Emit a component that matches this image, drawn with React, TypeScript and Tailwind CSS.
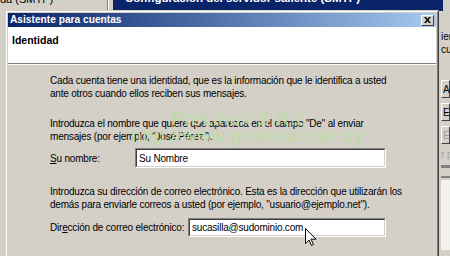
import React from 'react';

const face = 'bg-[#D4D0C8]';

function ClassicInput({ value, className }: { value: string; className: string }) {
  return (
    <div className={`border border-t-[#808080] border-l-[#808080] border-b-white border-r-white ${className}`}>
      <div className="h-full border border-t-[#404040] border-l-[#404040] border-b-[#D4D0C8] border-r-[#D4D0C8] bg-white flex items-center px-[2px]">
        <span className="text-black">{value}</span>
      </div>
    </div>
  );
}

function SideButton({ label, disabled }: { label: string; disabled?: boolean }) {
  return (
    <div className="h-[18px] border border-t-white border-l-white border-b-[#404040] border-r-[#404040] flex items-center pl-[1px]">
      <span className={disabled ? 'text-[#A0A0A0]' : 'text-black'}>{label}</span>
    </div>
  );
}

export default function App() {
  return (
    <div className={`relative w-[450px] h-[256px] overflow-hidden ${face} font-['Liberation_Sans',Arial,sans-serif] text-[10px] leading-[13px] text-black`}>
      {/* background window */}
      <div className="flex h-full">
        <div className="w-[108px] border-r border-r-[#808080] shrink-0 overflow-hidden">
          <div className="-mt-[8px] whitespace-nowrap text-[11px] leading-[14px]">da (SMTP)</div>
        </div>
        <div className="w-[5px] border-l border-l-white shrink-0" />
        <div className="flex-1 flex flex-col">
          <div className="h-[11px] w-[330px] bg-[#0A246A] overflow-hidden">
            <div className="-mt-[9px] pl-[12px] whitespace-nowrap text-white font-bold text-[11.5px] leading-[14px]">
              Configuración del servidor saliente (SMTP)
            </div>
          </div>
          <div className="flex-1 flex justify-end">
            <div className="w-[9px] overflow-hidden whitespace-nowrap flex flex-col">
              <div className="mt-[19px]">ierda</div>
              <div>cuenta</div>
              <div className="mt-[24px] flex flex-col gap-[5px]">
                <SideButton label="Añadir" />
                <SideButton label="Editar" />
                <SideButton label="Eliminar" disabled />
              </div>
              <div className="mt-[4px] text-[#A0A0A0]">r pred</div>
              <div className="mt-[4px] h-[3px] bg-[#808080]" />
              <div className="mt-[8px] h-[2px] bg-[#808080]" />
              <div className="mt-[2px] h-[70px] bg-[#F2F1EE]" />
            </div>
          </div>
        </div>
      </div>

      {/* dialog window */}
      <div className="absolute left-[5px] top-[10px] w-[434px] h-[260px] border border-t-[#D4D0C8] border-l-[#D4D0C8] border-b-[#404040] border-r-[#404040]">
        <div className={`h-full border border-t-white border-l-white border-b-[#808080] border-r-[#808080] p-[1px] ${face} flex flex-col`}>
          {/* title bar */}
          <div className="h-[14px] bg-gradient-to-r from-[#0A246A] to-[#A6CAF0] flex items-center justify-between pl-[2px] pr-[2px]">
            <span className="text-white font-bold text-[10.2px] leading-[14px]">Asistente para cuentas</span>
            <div className="w-[13px] h-[11px] border border-t-white border-l-white border-b-[#404040] border-r-[#404040] bg-[#D4D0C8] flex items-center justify-center">
              <svg width="7" height="6" viewBox="0 0 7 6">
                <path d="M0 0h2l1.5 2 1.5-2h2L4.5 3 7 6H5L3.5 4 2 6H0l2.5-3z" fill="#000" />
              </svg>
            </div>
          </div>
          {/* header */}
          <div className="h-[36px] bg-white pl-[4px] pt-[7px]">
            <div className="font-bold text-[10.5px]">Identidad</div>
          </div>
          <div className="h-[1px] bg-[#808080]" />
          <div className="h-[1px] bg-white" />
          {/* body */}
          <div className="relative flex-1 pl-[42px] pt-[9px]">
            <p className="tracking-[-0.2px]">
              Cada cuenta tiene una identidad, que es la información que le identifica a usted
              <br />
              ante otros cuando ellos reciben sus mensajes.
            </p>
            <p className="mt-[17px] tracking-[-0.2px]">
              Introduzca el nombre que quiere que aparezca en el campo "De" al enviar
              <br />
              mensajes (por ejemplo, "José Pérez").
            </p>
            <div className="mt-[5px] flex items-center h-[20px] tracking-[-0.2px]">
              <span className="w-[85px]">
                <span className="underline">S</span>u nombre:
              </span>
              <ClassicInput value="Su Nombre" className="w-[251px] h-[20px]" />
            </div>
            <p className="mt-[17px] tracking-[-0.2px]">
              Introduzca su dirección de correo electrónico. Esta es la dirección que utilizarán los
              <br />
              demás para enviarle correos a usted (por ejemplo, "usuario@ejemplo.net").
            </p>
            <div className="mt-[7px] flex items-center h-[19px] tracking-[-0.2px]">
              <span className="w-[138px]">
                Dir<span className="underline">e</span>cción de correo electrónico:
              </span>
              <ClassicInput value="sucasilla@sudominio.com" className="w-[198px] h-[19px]" />
            </div>

            {/* watermark */}
            <div className="pointer-events-none absolute left-[123px] top-[45px] font-['Liberation_Sans_Narrow',sans-serif] text-[19px] leading-[17px] tracking-[0.6px] text-[#bcdca4]">
              <div className="pl-[40px]">ProLinux S.R.L</div>
              <div>http://www.prolinux.net.uy</div>
            </div>
          </div>
        </div>
      </div>

      {/* mouse pointer */}
      <svg className="absolute left-[305px] top-[228px]" width="12" height="19" viewBox="0 0 12 19">
        <path d="M0.5 0.5v15l3.5-3.5 2.5 5.5 2-1-2.5-5.3h5z" fill="#fff" stroke="#000" strokeWidth="1" strokeLinejoin="miter" />
      </svg>
    </div>
  );
}
